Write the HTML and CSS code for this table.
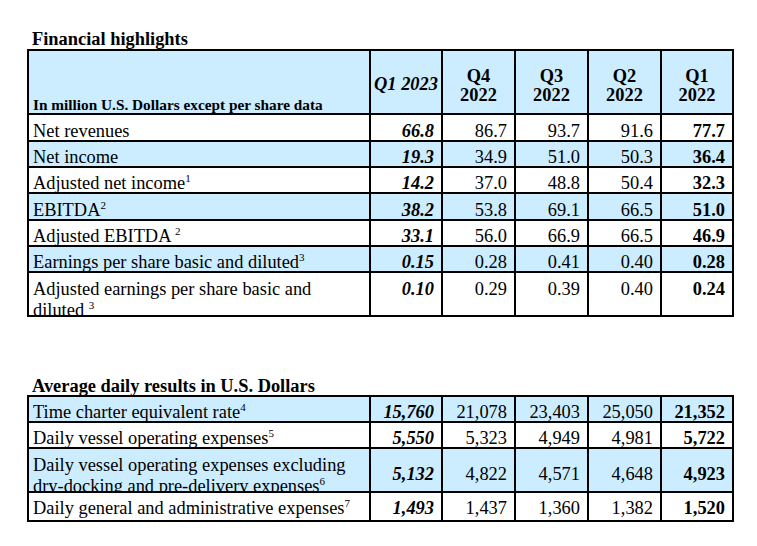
FILE: index.html
```html
<!DOCTYPE html>
<html lang="en">
<head>
  <meta charset="UTF-8">
  <title>Financial highlights</title>
  <link rel="stylesheet" href="styles.css">
</head>
<body>
  <div class="page">
    <h2 class="title">Financial highlights</h2>
    <table class="fin">
      <colgroup>
        <col class="c-label"><col class="c-num"><col class="c-num2"><col class="c-num2"><col class="c-num2"><col class="c-num">
      </colgroup>
      <tr class="head blue">
        <th class="unit">In million U.S. Dollars except per share data</th>
        <th class="cur">Q1 2023</th>
        <th>Q4<br>2022</th>
        <th>Q3<br>2022</th>
        <th>Q2<br>2022</th>
        <th>Q1<br>2022</th>
      </tr>
      <tr class="r27">
        <td class="lbl">Net revenues</td>
        <td class="cur">66.8</td><td class="shift">86.7</td><td>93.7</td><td>91.6</td><td class="prev">77.7</td>
      </tr>
      <tr class="blue">
        <td class="lbl">Net income</td>
        <td class="cur">19.3</td><td>34.9</td><td>51.0</td><td>50.3</td><td class="prev">36.4</td>
      </tr>
      <tr>
        <td class="lbl">Adjusted net income<sup>1</sup></td>
        <td class="cur">14.2</td><td>37.0</td><td>48.8</td><td>50.4</td><td class="prev">32.3</td>
      </tr>
      <tr class="blue r27">
        <td class="lbl">EBITDA<sup>2</sup></td>
        <td class="cur">38.2</td><td>53.8</td><td>69.1</td><td>66.5</td><td class="prev">51.0</td>
      </tr>
      <tr>
        <td class="lbl">Adjusted EBITDA <sup>2</sup></td>
        <td class="cur">33.1</td><td>56.0</td><td>66.9</td><td>66.5</td><td class="prev">46.9</td>
      </tr>
      <tr class="blue">
        <td class="lbl">Earnings per share basic and diluted<sup>3</sup></td>
        <td class="cur">0.15</td><td>0.28</td><td>0.41</td><td>0.40</td><td class="prev">0.28</td>
      </tr>
      <tr class="tall">
        <td class="lbl"><div class="clip">Adjusted earnings per share basic and<br>diluted <sup>3</sup></div></td>
        <td class="cur">0.10</td><td>0.29</td><td>0.39</td><td>0.40</td><td class="prev">0.24</td>
      </tr>
    </table>

    <h2 class="title title-daily">Average daily results in U.S. Dollars</h2>
    <table class="fin">
      <colgroup>
        <col class="c-label"><col class="c-num"><col class="c-num2"><col class="c-num2"><col class="c-num2"><col class="c-num">
      </colgroup>
      <tr class="blue">
        <td class="lbl">Time charter equivalent rate<sup>4</sup></td>
        <td class="cur">15,760</td><td>21,078</td><td>23,403</td><td>25,050</td><td class="prev">21,352</td>
      </tr>
      <tr>
        <td class="lbl">Daily vessel operating expenses<sup>5</sup></td>
        <td class="cur">5,550</td><td>5,323</td><td>4,949</td><td>4,981</td><td class="prev">5,722</td>
      </tr>
      <tr class="blue tall mid">
        <td class="lbl"><div class="clip">Daily vessel operating expenses excluding<br>dry-docking and pre-delivery expenses<sup>6</sup></div></td>
        <td class="cur">5,132</td><td>4,822</td><td>4,571</td><td>4,648</td><td class="prev">4,923</td>
      </tr>
      <tr class="r29">
        <td class="lbl">Daily general and administrative expenses<sup>7</sup></td>
        <td class="cur">1,493</td><td>1,437</td><td>1,360</td><td>1,382</td><td class="prev">1,520</td>
      </tr>
    </table>
  </div>
</body>
</html>
```

FILE: styles.css
```css
body { margin: 0; background: #fff; color: #000; font-family: "Liberation Serif", "Times New Roman", serif; font-size: 18.4px; }
.page { padding: 29px 0 0 27px; }

.title { margin: 0; padding-left: 5px; font-size: 18.4px; line-height: 20px; height: 20px; font-weight: bold; overflow: hidden; }
.title-daily { margin-top: 59px; height: 19px; }

.fin { border-collapse: collapse; table-layout: fixed; width: 706px; }
.c-label { width: 342px; }
.c-num { width: 72px; }
.c-num2 { width: 73px; }

.fin td, .fin th { border: 2px solid #000; padding: 0 7px 0 4px; line-height: 18px; vertical-align: bottom; text-align: right; white-space: nowrap; }
.fin tr { height: 26px; }
.fin tr.r27 { height: 27px; }
.fin tr.r29 { height: 29px; }
.fin tr.r29 td { padding-bottom: 3px; }
.fin tr.head { height: 64px; }
.blue td, .blue th { background: #ccecff; }

.fin th { text-align: center; vertical-align: middle; line-height: 19px; padding: 8px 2px 0; }
.fin th.unit { text-align: left; vertical-align: bottom; font-size: 15.3px; line-height: 17px; padding: 0 4px 0; }
.fin th.cur { font-style: italic; padding-top: 4px; }

.fin td.lbl { text-align: left; }
.cur { font-weight: bold; font-style: italic; }
.prev { font-weight: bold; }
.shift { padding-right: 15px; }

.fin tr.tall { height: 44px; }
.fin tr.tall td { vertical-align: top; padding-top: 7px; }
.fin tr.tall td.lbl { padding: 0 4px; }
.fin tr.tall.mid td { vertical-align: middle; padding-top: 8px; }
.fin tr.tall.mid td.lbl { vertical-align: top; padding: 0 4px; }
.clip { height: 42px; overflow: hidden; line-height: 21px; padding-top: 6px; box-sizing: border-box; }

sup { font-size: 11px; line-height: 0; vertical-align: 7px; }
```
